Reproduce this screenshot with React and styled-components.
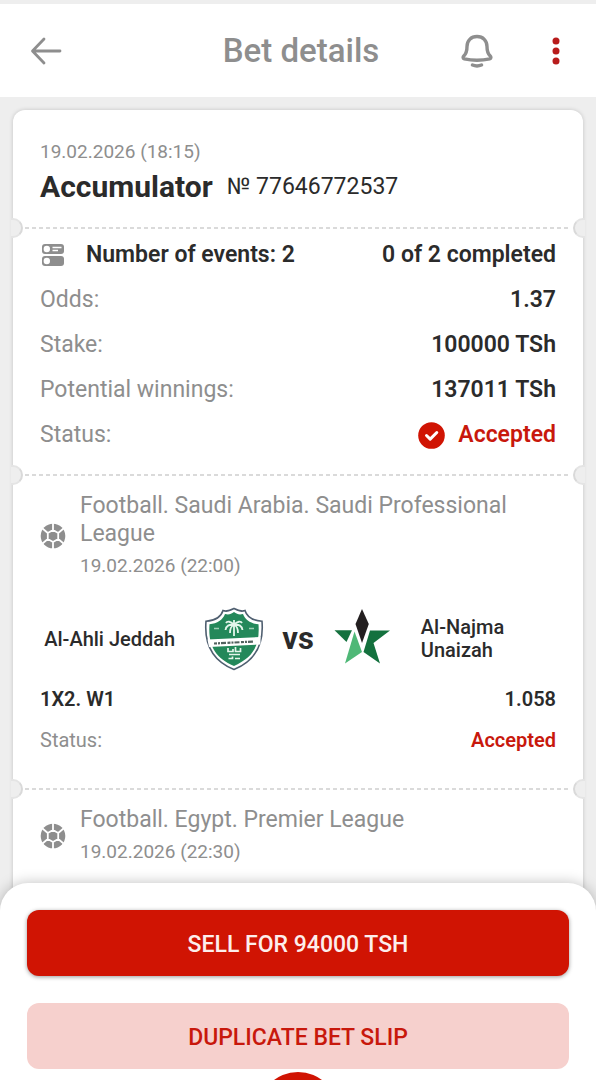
import React from "react";
import styled, { createGlobalStyle, css } from "styled-components";

const INK = "#2b2b2b";
const GREY = "#8e8e8e";
const RED = "#d01403";
const PAGE = "#eeeeee";

const GlobalStyle = createGlobalStyle`
  *, *::before, *::after { box-sizing: border-box; }
  body {
    margin: 0;
    background: ${PAGE};
    color: ${INK};
    font-family: Roboto, "Liberation Sans", sans-serif;
  }
  h1, h2, h3, p, dl, dd, dt { margin: 0; font-weight: 400; }
  button { font: inherit; border: 0; padding: 0; cursor: pointer; }
`;

const Screen = styled.div`
  display: flex;
  flex-direction: column;
  height: 100vh;
  overflow: hidden;
`;

const Header = styled.header`
  flex: none;
  display: grid;
  grid-template-columns: 1fr auto 1fr;
  align-items: center;
  margin-top: 4px;
  padding: 25px 18px 24px 24px;
  background: #fff;
`;

const Title = styled.h1`
  font-size: 33px;
  line-height: 44px;
  font-weight: 500;
  color: ${GREY};
`;

const Actions = styled.div`
  display: flex;
  justify-content: flex-end;
  gap: 35px;
`;

const IconButton = styled.button`
  display: grid;
  place-items: center;
  width: 44px;
  height: 44px;
  background: none;
  color: ${(p) => (p.$accent ? "#b81c1c" : GREY)};
`;

const Scroller = styled.main`
  flex: 1;
  min-height: 0;
  display: flex;
  flex-direction: column;
  padding: 13px 13px 0;
  overflow-y: auto;
  scrollbar-width: none;
`;

const Slip = styled.article`
  flex: 1 0 auto;
  background: #fff;
  border-radius: 12px 12px 0 0;
  box-shadow: 0 0 4px rgba(0, 0, 0, 0.18);
`;

const notch = css`
  content: "";
  position: absolute;
  bottom: -11px;
  width: 12px;
  height: 20px;
  background: ${PAGE};
  border: 2px solid #d9d9d9;
  border-top-color: #e4e4e4;
  border-bottom-color: #e4e4e4;
  z-index: 1;
`;

const Section = styled.section`
  position: relative;
  padding: ${(p) => p.$pad};

  &:not(:last-child)::before {
    ${notch}
    left: -2px;
    border-left: 0;
    border-radius: 0 10px 10px 0;
  }
  &:not(:last-child)::after {
    ${notch}
    right: -2px;
    border-right: 0;
    border-radius: 10px 0 0 10px;
  }
`;

const Perforation = styled.div`
  height: 2px;
  margin: 0 12px;
  background: repeating-linear-gradient(90deg, #dadada 0 4px, transparent 4px 7px);
`;

const Time = styled.time`
  display: block;
  font-size: 19px;
  line-height: ${(p) => (p.$tall ? "28px" : "24px")};
  color: ${GREY};
`;

const SlipHeading = styled.div`
  display: flex;
  align-items: center;
  gap: 14px;
  margin-top: 5px;
`;

const SlipType = styled.h2`
  font-size: 30px;
  line-height: 36px;
  font-weight: 700;
`;

const SlipNumber = styled.span`
  font-size: 23px;
  line-height: 28px;
`;

const Summary = styled.dl`
  display: flex;
  flex-direction: column;
  gap: 17px;
`;

const Line = styled.div`
  display: flex;
  justify-content: space-between;
  font-size: ${(p) => (p.$small ? "20px" : "23px")};
  line-height: ${(p) => (p.$small ? "24px" : "28px")};
`;

const Label = styled.dt`
  display: flex;
  align-items: center;
  gap: 21px;
  color: ${(p) => (p.$strong ? INK : GREY)};
  font-weight: ${(p) => (p.$strong ? 600 : 400)};
`;

const Value = styled.dd`
  display: flex;
  align-items: center;
  gap: 13px;
  font-weight: 600;
  color: ${(p) => (p.$accent ? "#c8180c" : INK)};
`;

const EventHead = styled.header`
  display: flex;
  align-items: center;
  gap: 14px;
  svg { flex: none; }
`;

const League = styled.h3`
  margin-bottom: 4px;
  font-size: 23px;
  line-height: 28px;
  color: ${GREY};
`;

const Match = styled.div`
  display: grid;
  grid-template-columns: 1fr auto 1fr;
  align-items: center;
  gap: 16px;
  margin: 27px 0 16px;
`;

const Team = styled.div`
  display: flex;
  align-items: center;
  justify-content: ${(p) => (p.$home ? "flex-end" : "flex-start")};
  gap: 27px;
  svg { flex: none; }
`;

const TeamName = styled.span`
  max-width: 135px;
  font-size: 20px;
  line-height: 23px;
  font-weight: 500;
`;

const Versus = styled.span`
  font-size: 31px;
  line-height: 36px;
  font-weight: 700;
`;

const Sheet = styled.footer`
  position: relative;
  z-index: 2;
  flex: none;
  display: flex;
  flex-direction: column;
  gap: 27px;
  margin-top: -28px;
  padding: 27px 27px 0;
  background: #fff;
  border-radius: 28px 28px 0 0;
  box-shadow: 0 0 14px rgba(0, 0, 0, 0.25);
`;

const SheetButton = styled.button`
  height: 66px;
  padding-top: 3px;
  border-radius: 12px;
  font-size: 23px;
  line-height: 28px;
  font-weight: 500;
  color: ${(p) => (p.$primary ? "#fdeeec" : "#c8180c")};
  background: ${(p) => (p.$primary ? RED : "#f6d0cd")};
  box-shadow: ${(p) => (p.$primary ? "0 1px 4px rgba(0, 0, 0, 0.4)" : "none")};
`;

const RoundButton = styled.button`
  align-self: center;
  width: 80px;
  height: 80px;
  margin: -24px 0 -72px;
  border-radius: 50%;
  background: ${RED};
`;

const BackIcon = () => (
  <svg width="32" height="28" viewBox="0 0 32 28" fill="none" stroke="currentColor" strokeWidth="2.8" strokeLinecap="round" strokeLinejoin="round" aria-hidden="true">
    <path d="M30 14H3M14 2 2.500 14 14 26" />
  </svg>
);

const BellIcon = () => (
  <svg width="32" height="34" viewBox="0 0 32 34" fill="none" stroke="currentColor" strokeWidth="3.400" strokeLinecap="round" strokeLinejoin="round" aria-hidden="true">
    <path d="M16 2.500c-6 0-10 4.200-10 10 0 5.500-1 7.300-3 9.300-1.300 1.300-1.200 2.800.2 3.100 8.300 1.700 17.300 1.700 25.600 0 1.400-.3 1.500-1.800.2-3.100-2-2-3-3.800-3-9.300 0-5.800-4-10-10-10Z" />
    <path d="M11.500 31c2.800 1.200 6.200 1.200 9 0" />
  </svg>
);

const MoreIcon = () => (
  <svg width="8" height="28" viewBox="0 0 8 28" fill="currentColor" aria-hidden="true">
    <circle cx="4" cy="4" r="3.500" />
    <circle cx="4" cy="14" r="3.500" />
    <circle cx="4" cy="24" r="3.500" />
  </svg>
);

const EventsIcon = () => (
  <svg width="25" height="24" viewBox="0 0 25 24" aria-hidden="true">
    <rect x="2" y="1" width="22" height="10" rx="3" fill={GREY} />
    <rect x="2" y="13" width="22" height="10" rx="3" fill={GREY} />
    <circle cx="6.800" cy="6" r="3.200" fill="#fff" />
    <circle cx="6.800" cy="18" r="3.200" fill="#fff" />
    <path d="M12.500 4.500h9M12.500 7.500h5.500" stroke="#fff" strokeWidth="1.500" />
  </svg>
);

const CheckIcon = () => (
  <svg width="27" height="27" viewBox="0 0 27 27" aria-hidden="true">
    <circle cx="13.500" cy="13.500" r="13.300" fill={RED} />
    <path d="m8.500 13.500 3.700 3.600 6.600-6.600" fill="none" stroke="#fff" strokeWidth="3" strokeLinecap="round" strokeLinejoin="round" />
  </svg>
);

const BallIcon = () => (
  <svg width="26" height="26" viewBox="0 0 26 26" aria-hidden="true">
    <circle cx="13" cy="13" r="12.300" fill={GREY} />
    <path
      d="M13 0v7M13 19v7M2.500 5.500l5.300 4.500M23.500 5.500l-5.300 4.500M2.500 20.500l5.300-4.500M23.500 20.500l-5.300-4.500M13 7l5.200 3v6L13 19l-5.200-3v-6Z"
      fill="none"
      stroke="#fff"
      strokeWidth="1.800"
    />
  </svg>
);

const AhliCrest = () => (
  <svg width="64" height="64" viewBox="0 0 64 64" role="img" aria-label="Al-Ahli crest">
    <path d="M21 3.500c4 1.500 7 0 11-2 4 2 7 3.500 11 2 2 7 7.500 10 17 10.800C62 38 53 54 32 62.500 11 54 2 38 4 14.300 13.500 13.500 19 10.500 21 3.500Z" fill="#fff" stroke="#4f5f70" strokeWidth="1.600" />
    <path d="M23 7c4 1 6 0 9-2 3 2 5 3 9 2 2.500 6 7.500 9.500 15.500 10.300 1.500 20.700-5 33.200-24.500 41.700C12.500 50.500 6 38 7.500 17.300 15.500 16.500 20.500 13 23 7Z" fill="#24885a" />
    <path d="m5.500 32.500 53-2.500v7.500L7 40Z" fill="#fff" />
    <path d="m12 36.500 40-2" stroke="#52625f" strokeWidth="2.200" strokeDasharray="3 1 2 1 5 1.500" />
    <path d="M32 29V18M32 18c-3-4-7-4-8-2M32 18c3-4 7-4 8-2M32 18c-5-1-8 1-8.500 5M32 18c5-1 8 1 8.500 5M32 18c-3 1-4 4-4 8M32 18c3 1 4 4 4 8M32 18v-5" fill="none" stroke="#e4f5eb" strokeWidth="1.800" />
    <path d="M12 21.500h5M47 21.500h5" stroke="#9fceb6" strokeWidth="1.500" />
    <path d="M26 41v3.500h5V42M33.500 40v4.500h5V41M27 47.500h11M26.500 51.500h4v-2M33 51.500h5" fill="none" stroke="#e4f5eb" strokeWidth="1.700" />
  </svg>
);

const NajmaCrest = () => (
  <svg width="64" height="64" viewBox="0 0 64 64" role="img" aria-label="Al-Najma crest">
    <path d="m32 2 6.800 15L32 36l-6.500-19Z" fill="#231f20" />
    <path d="M4.500 23.300h17.500L16.500 35Z" fill="#14713e" />
    <path d="M40 23.500h20L43.500 36l6.500 20.500L33.500 45Z" fill="#14713e" />
    <path d="m24.500 24.500 7.500 20.500-17 11.500Z" fill="#4fb877" />
  </svg>
);

const EventHeading = ({ league, time }) => (
  <EventHead>
    <BallIcon />
    <div>
      <League>{league}</League>
      <Time $tall>{time}</Time>
    </div>
  </EventHead>
);

export default function App() {
  return (
    <>
      <GlobalStyle />
      <Screen>
        <Header>
          <IconButton type="button" aria-label="Back"><BackIcon /></IconButton>
          <Title>Bet details</Title>
          <Actions>
            <IconButton type="button" aria-label="Notifications"><BellIcon /></IconButton>
            <IconButton type="button" aria-label="More" $accent><MoreIcon /></IconButton>
          </Actions>
        </Header>

        <Scroller>
          <Slip>
            <Section $pad="30px 27px 22px">
              <Time>19.02.2026 (18:15)</Time>
              <SlipHeading>
                <SlipType>Accumulator</SlipType>
                <SlipNumber>№ 77646772537</SlipNumber>
              </SlipHeading>
            </Section>
            <Perforation />
            <Section $pad="12px 27px 25px">
              <Summary>
                <Line>
                  <Label $strong><EventsIcon />Number of events: 2</Label>
                  <Value>0 of 2 completed</Value>
                </Line>
                <Line><Label>Odds:</Label><Value>1.37</Value></Line>
                <Line><Label>Stake:</Label><Value>100000 TSh</Value></Line>
                <Line><Label>Potential winnings:</Label><Value>137011 TSh</Value></Line>
                <Line><Label>Status:</Label><Value $accent><CheckIcon />Accepted</Value></Line>
              </Summary>
            </Section>
            <Perforation />
            <Section $pad="16px 27px 36px">
              <EventHeading league="Football. Saudi Arabia. Saudi Professional League" time="19.02.2026 (22:00)" />
              <Match>
                <Team $home>
                  <TeamName>Al-Ahli Jeddah</TeamName>
                  <AhliCrest />
                </Team>
                <Versus>vs</Versus>
                <Team>
                  <NajmaCrest />
                  <TeamName>Al-Najma Unaizah</TeamName>
                </Team>
              </Match>
              <Summary>
                <Line $small><Label $strong>1X2. W1</Label><Value>1.058</Value></Line>
                <Line $small><Label>Status:</Label><Value $accent>Accepted</Value></Line>
              </Summary>
            </Section>
            <Perforation />
            <Section $pad="16px 27px 36px">
              <EventHeading league="Football. Egypt. Premier League" time="19.02.2026 (22:30)" />
            </Section>
          </Slip>
        </Scroller>

        <Sheet>
          <SheetButton type="button" $primary>SELL FOR 94000 TSH</SheetButton>
          <SheetButton type="button">DUPLICATE BET SLIP</SheetButton>
          <RoundButton type="button" aria-label="Bet slip" />
        </Sheet>
      </Screen>
    </>
  );
}
